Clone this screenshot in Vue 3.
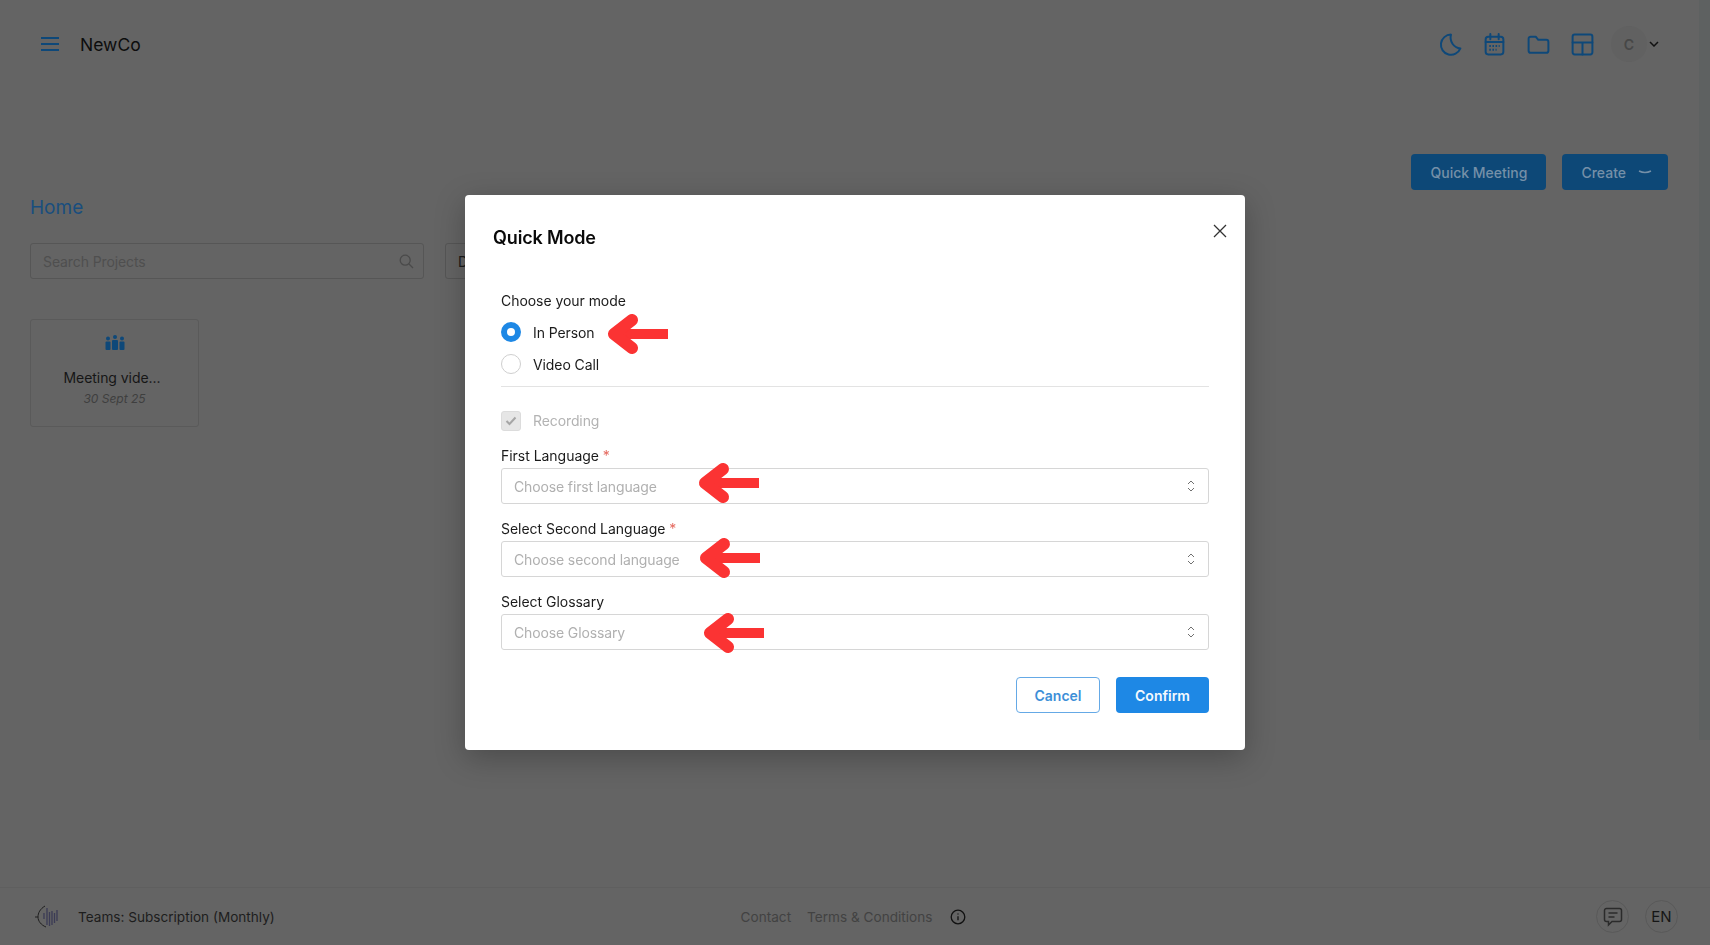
<script setup>
const fields = [
  { label: 'First Language', req: true, ph: 'Choose first language' },
  { label: 'Select Second Language', req: true, ph: 'Choose second language' },
  { label: 'Select Glossary', req: false, ph: 'Choose Glossary' }
]
const arrows = [
  { x: 141, y: 119 },
  { x: 232, y: 268 },
  { x: 233, y: 343 },
  { x: 237, y: 418 }
]
</script>

<template>
  <div class="page">
    <header class="topbar">
      <div class="brand">
        <svg class="burger" width="20" height="16" viewBox="0 0 20 16"><path d="M1 2h18M1 8h18M1 14h18" /></svg>
        <span class="brand-name">NewCo</span>
      </div>
      <div class="top-actions">
        <svg class="ticon" viewBox="0 0 24 24"><path d="M12.500 2.500a9.700 9.700 0 1 0 9 13.300A10.500 10.500 0 0 1 12.500 2.500z" /></svg>
        <svg class="ticon" viewBox="0 0 24 24"><rect x="3.500" y="4.500" width="17" height="17" rx="2.500" /><path d="M3.500 9.500h17M8 2v5M16 2v5" /><path class="dots" d="M7 13.500h10M7 17h7" /></svg>
        <svg class="ticon" viewBox="0 0 24 24"><path d="M2.500 6.500A2 2 0 0 1 4.500 4.500h4.800l2.500 3h7.700a2 2 0 0 1 2 2v8.500a2 2 0 0 1-2 2H4.500a2 2 0 0 1-2-2z" /></svg>
        <svg class="ticon" viewBox="0 0 24 24"><rect x="2.500" y="2.500" width="19" height="19" rx="2" /><path d="M2.500 10h19M12 10v11.500" /></svg>
        <div class="user">
          <span class="avatar">C</span>
          <svg class="user-chev" width="10" height="6" viewBox="0 0 10 6"><path d="M1 1l4 4 4-4" /></svg>
        </div>
      </div>
    </header>

    <div class="cta-row">
      <button class="cta">Quick Meeting</button>
      <button class="cta create">Create
        <svg width="14" height="5" viewBox="0 0 14 5"><path d="M1 1q6 3 12 0" /></svg>
      </button>
    </div>

    <main class="content">
      <h1 class="home">Home</h1>
      <div class="filters">
        <div class="search">
          <span>Search Projects</span>
          <svg width="15" height="15" viewBox="0 0 15 15"><circle cx="6.200" cy="6.200" r="5" /><path d="M10 10l4 4" /></svg>
        </div>
        <div class="sort">Date</div>
      </div>
      <div class="card">
        <svg class="card-icon" width="20" height="15" viewBox="0 0 20 15">
          <circle cx="3" cy="3.500" r="2" /><circle cx="10" cy="2" r="2" /><circle cx="17" cy="3.500" r="2" />
          <rect x="0.500" y="6.500" width="5" height="8.500" rx="1" /><rect x="7" y="5" width="6" height="10" rx="1" /><rect x="14.500" y="6.500" width="5" height="8.500" rx="1" />
        </svg>
        <div class="card-title">Meeting vide...</div>
        <div class="card-date">30 Sept 25</div>
      </div>
    </main>

    <footer class="footer">
      <div class="foot-left">
        <svg class="logo" width="26" height="24" viewBox="0 0 26 24">
          <path class="logo-arc" d="M11 1C6 4 4 8 4 12s3 8 8 10M1 12h3" />
          <path class="logo-bars" d="M10 8v6M13 3v17M15.500 7v14M18 6v14M20.500 8v10M23 5v11" />
        </svg>
        <span>Teams: Subscription (Monthly)</span>
      </div>
      <div class="foot-mid">
        <span>Contact</span>
        <span>Terms &amp; Conditions</span>
        <svg width="16" height="16" viewBox="0 0 16 16"><circle cx="8" cy="8" r="6.800" /><path d="M8 7.300v4M8 4.500v1" /></svg>
      </div>
      <div class="foot-right">
        <span class="round">
          <svg width="20" height="20" viewBox="0 0 20 20"><path d="M3.500 1.500h13a2 2 0 0 1 2 2v9a2 2 0 0 1-2 2H9l-3.500 3.500v-3.500h-2a2 2 0 0 1-2-2v-9a2 2 0 0 1 2-2z" /><path d="M5.500 6h9M5.500 10h6" /></svg>
        </span>
        <span class="round en">EN</span>
      </div>
    </footer>

    <div class="scrollbar"></div>

    <div class="overlay">
      <section class="modal">
        <div class="modal-head">
          <h2>Quick Mode</h2>
          <svg class="close" width="14" height="14" viewBox="0 0 14 14"><path d="M1 1l12 12M13 1L1 13" /></svg>
        </div>
        <div class="modal-body">
          <div class="label mode-label">Choose your mode</div>
          <label class="opt"><span class="radio on"></span>In Person</label>
          <label class="opt"><span class="radio"></span>Video Call</label>
          <div class="divider"></div>
          <label class="opt rec">
            <span class="check">
              <svg width="12" height="10" viewBox="0 0 12 10"><path d="M1.500 5l3 3 6-6.500" /></svg>
            </span>Recording
          </label>
          <div v-for="f in fields" :key="f.label" class="field">
            <div class="label">{{ f.label }}<span v-if="f.req" class="req"> *</span></div>
            <div class="select">
              <span>{{ f.ph }}</span>
              <svg width="8" height="12" viewBox="0 0 8 12"><path d="M1 4l3-3 3 3M1 8l3 3 3-3" /></svg>
            </div>
          </div>
          <div class="modal-actions">
            <button class="btn cancel">Cancel</button>
            <button class="btn confirm">Confirm</button>
          </div>
        </div>
        <svg
          v-for="(a, i) in arrows"
          :key="i"
          class="arrow"
          width="62"
          height="40"
          viewBox="0 0 62 40"
          :style="{ left: a.x + 'px', top: a.y + 'px' }"
        >
          <path class="arrow-shaft" d="M12 20H62" />
          <path class="arrow-head" d="M26 6L8 20l18 14" />
        </svg>
      </section>
    </div>
  </div>
</template>

<style scoped>
.page {
  height: 945px;
  display: flex;
  flex-direction: column;
  overflow: hidden;
  background: #646464;
  font-family: Inter, "Liberation Sans", sans-serif;
  color: #0d0d0d;
}
.topbar {
  height: 88px;
  flex: none;
  display: flex;
  align-items: center;
  justify-content: space-between;
  padding: 0 51px 0 40px;
  box-sizing: border-box;
}
.brand { display: flex; align-items: center; gap: 20px; }
.burger path { stroke: #0e4879; stroke-width: 2; fill: none; }
.brand-name { font-size: 17.500px; font-weight: 400; }
.top-actions { display: flex; align-items: center; }
.ticon {
  width: 25px;
  height: 25px;
  margin-right: 19px;
  fill: none;
  stroke: #0e4879;
  stroke-width: 1.900;
  stroke-linejoin: round;
  stroke-linecap: round;
}
.ticon .dots { stroke-dasharray: 1.500 1.500; stroke-linecap: butt; }
.user { display: flex; align-items: center; gap: 2px; margin-left: -3px; }
.avatar {
  width: 36px;
  height: 36px;
  border-radius: 50%;
  background: #616161;
  color: #474747;
  display: flex;
  align-items: center;
  justify-content: center;
  font-size: 14px;
  font-weight: 600;
}
.user-chev path { stroke: #111; stroke-width: 1.500; fill: none; }
.cta-row {
  flex: none;
  display: flex;
  justify-content: flex-end;
  gap: 16px;
  margin-top: 66px;
  padding-right: 42px;
}
.cta {
  height: 36px;
  padding: 0 19px;
  border: 0;
  border-radius: 4px;
  background: #0d4877;
  color: #7590a8;
  font: 500 14px Inter, "Liberation Sans", sans-serif;
  display: flex;
  align-items: center;
  gap: 12px;
}
.create { padding-right: 16px; }
.cta svg path { fill: none; stroke: #7590a8; stroke-width: 1.500; }
.content { flex: 1; padding: 0 30px; margin-top: 6px; }
.home {
  margin: 0;
  font-size: 19px;
  line-height: 24px;
  font-weight: 400;
  color: #194e7e;
}
.filters { display: flex; gap: 21px; margin-top: 23px; }
.search, .sort {
  height: 36px;
  box-sizing: border-box;
  border: 1px solid #565656;
  border-radius: 3px;
  display: flex;
  align-items: center;
  font-size: 14px;
}
.search {
  width: 394px;
  justify-content: space-between;
  padding: 0 9px 0 12px;
  color: #4f4f4f;
  letter-spacing: -0.1px;
}
.search svg { fill: none; stroke: #4a4a4a; stroke-width: 1.300; }
.sort { width: 120px; padding: 0 12px; color: #1a1a1a; }
.card {
  width: 169px;
  height: 108px;
  box-sizing: border-box;
  margin-top: 40px;
  border: 1px solid #5a5a5a;
  border-radius: 3px;
  display: flex;
  flex-direction: column;
  align-items: center;
  padding-top: 15px;
}
.card-icon { fill: #0e4879; }
.card-title { margin: 18px 5px 0 0; font-size: 14px; line-height: 20px; color: #161616; letter-spacing: -0.05px; }
.card-date { margin-top: 2px; font-size: 12px; line-height: 18px; font-style: italic; color: #3f3f3f; }
.footer {
  height: 58px;
  flex: none;
  display: grid;
  grid-template-columns: 1fr auto 1fr;
  align-items: center;
  padding: 0 35px 0 32px;
  border-top: 1px solid #5f5f5f;
  font-size: 13.600px;
  box-sizing: border-box;
}
.foot-left { display: flex; align-items: center; gap: 18px; margin-left: 2px; color: #1d1d1d; }
.logo { fill: none; }
.logo-arc { stroke: #1e1e1e; stroke-width: 1; }
.logo-bars { stroke: #3b3b55; stroke-width: 1.300; }
.foot-mid {
  display: flex;
  align-items: center;
  gap: 16px;
  color: #424242;
}
.foot-mid svg { fill: none; stroke: #111; stroke-width: 1.300; margin-left: 2px; }
.foot-right { display: flex; justify-content: flex-end; gap: 16px; margin-right: -3px; }
.round {
  width: 33px;
  height: 33px;
  border-radius: 50%;
  border: 1px solid #595959;
  display: flex;
  align-items: center;
  justify-content: center;
  box-sizing: border-box;
}
.round svg { fill: none; stroke: #2b2b2b; stroke-width: 1.500; }
.en { font-size: 15px; color: #161616; }
.scrollbar {
  position: absolute;
  top: 0;
  right: 0;
  width: 11px;
  height: 740px;
  background: #5e6161;
}
.overlay {
  position: fixed;
  inset: 0;
  display: flex;
  align-items: center;
  justify-content: center;
}
.modal {
  position: relative;
  width: 780px;
  height: 555px;
  box-sizing: border-box;
  background: #fff;
  border-radius: 4px;
  box-shadow: 0 8px 30px rgba(0, 0, 0, 0.25);
  color: #1b1b1b;
}
.modal-head {
  display: flex;
  align-items: center;
  justify-content: space-between;
  height: 36px;
  padding: 24px 18px 0 28px;
}
.modal-head h2 { margin: 0; font-size: 18px; font-weight: 600; color: #0a0a0a; letter-spacing: -0.15px; }
.close { margin-top: -12px; }
.close path { stroke: #333; stroke-width: 1.300; fill: none; }
.modal-body { padding: 36px 36px 0; }
.label { font-size: 14px; line-height: 20px; font-weight: 500; }
.opt {
  display: flex;
  align-items: center;
  gap: 12px;
  height: 32px;
  font-size: 14px;
  letter-spacing: -0.1px;
}
.mode-label { margin-bottom: 5px; font-weight: 400; letter-spacing: -0.05px; }
.radio {
  width: 20px;
  height: 20px;
  box-sizing: border-box;
  border-radius: 50%;
  border: 1px solid #cfcfcf;
}
.radio.on { border: 6px solid #1e88e5; }
.divider { height: 1px; background: #e3e3e3; margin-top: 6px; }
.rec { margin-top: 23px; color: #b3b3b3; height: 21px; }
.check {
  width: 20px;
  height: 20px;
  box-sizing: border-box;
  border-radius: 3px;
  background: #e6e6e6;
  border: 1px solid #dcdcdc;
  display: flex;
  align-items: center;
  justify-content: center;
}
.check path { fill: none; stroke: #a6a6a6; stroke-width: 2; }
.field { margin-top: 15px; }
.field .label { font-weight: 400; line-height: 20px; margin-bottom: 2px; letter-spacing: -0.03px; }
.req { color: #e5695f; }
.select {
  height: 36px;
  box-sizing: border-box;
  border: 1px solid #d6d6d6;
  border-radius: 3px;
  display: flex;
  align-items: center;
  justify-content: space-between;
  padding: 0 13px 0 12px;
  color: #b0b0b0;
  font-size: 14px;
  letter-spacing: -0.13px;
}
.select svg { fill: none; stroke: #707070; stroke-width: 1; }
.modal-actions {
  display: flex;
  justify-content: flex-end;
  gap: 16px;
  margin-top: 27px;
}
.btn {
  height: 36px;
  border-radius: 4px;
  font: 600 14px Inter, "Liberation Sans", sans-serif;
  box-sizing: border-box;
}
.cancel {
  width: 84px;
  background: #fff;
  border: 1px solid #65a9e6;
  color: #3d8fd8;
}
.confirm {
  width: 93px;
  border: 0;
  background: #1e88e5;
  color: #f4f9fe;
}
.arrow { position: absolute; pointer-events: none; overflow: visible; }
.arrow-shaft { stroke: #fb3333; stroke-width: 10; fill: none; }
.arrow-head {
  stroke: #fb3333;
  stroke-width: 12;
  fill: none;
  stroke-linecap: round;
  stroke-linejoin: round;
}
</style>

<style>
html, body { margin: 0; overflow: hidden; }
</style>
